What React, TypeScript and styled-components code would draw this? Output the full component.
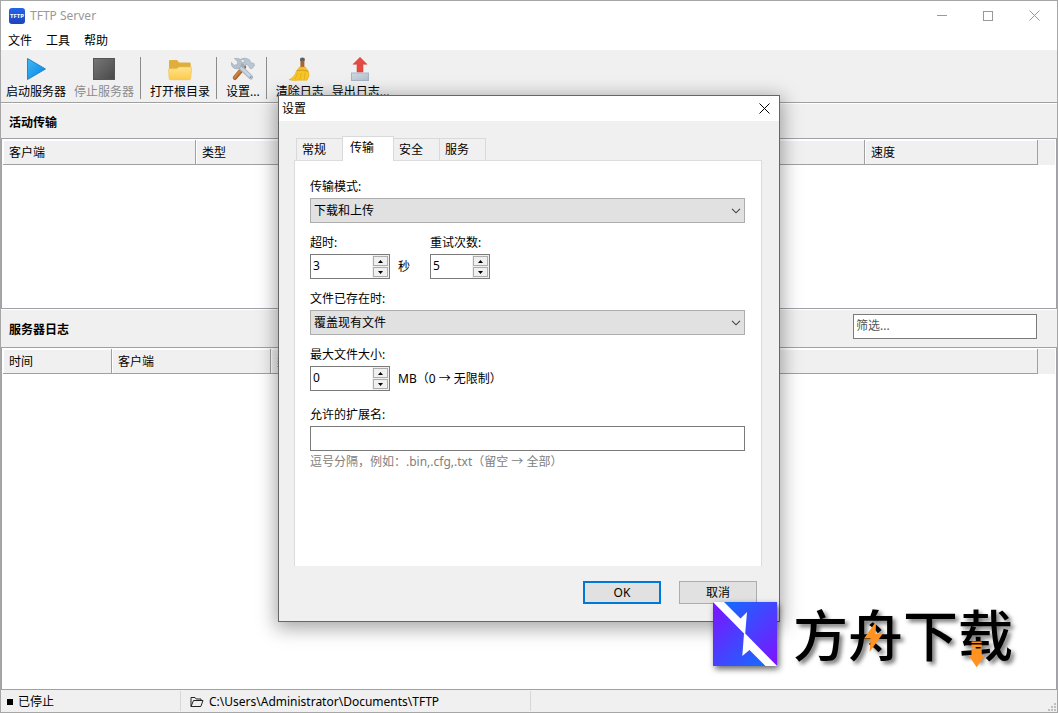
import React from "react";
import styled, { createGlobalStyle, css } from "styled-components";

const GlobalStyle = createGlobalStyle`
  *, *::before, *::after { box-sizing: border-box; }
  body { margin: 0; }
  body, button, input, select, table {
    font-family: "Noto Sans", "Noto Sans CJK SC", sans-serif;
    font-size: 12px;
    line-height: 16px;
    color: #000;
  }
  button, input, select { margin: 0; border-radius: 0; }
`;

const Window = styled.div`
  position: relative;
  display: flex;
  flex-direction: column;
  min-height: 100vh;
  border: 1px solid #a6a6a6;
  background: #fff;
  overflow: hidden;
`;

const TitleBar = styled.header`
  display: flex;
  align-items: center;
  height: 29px;
  padding-left: 8px;
`;

const WindowTitle = styled.h1`
  flex: 1;
  margin: 0 0 0 5px;
  font-size: 12px;
  font-weight: 400;
  color: #999;
`;

const CaptionButton = styled.button`
  display: flex;
  align-items: center;
  justify-content: center;
  width: 46px;
  height: 29px;
  padding: 0;
  border: 0;
  background: none;
`;

const MenuBar = styled.nav`
  display: flex;
  height: 20px;
  padding-left: 7px;
  gap: 14px;
`;

const MenuItem = styled.button`
  padding: 2px 0 0;
  border: 0;
  background: none;
  line-height: 18px;
`;

const Toolbar = styled.div`
  display: flex;
  height: 53px;
  padding-left: 1px;
  background: #f0f0f0;
  border-bottom: 1px solid #a0a0a0;
`;

const ToolButton = styled.button`
  display: flex;
  flex-direction: column;
  align-items: center;
  gap: 3px;
  padding: 5px 4px 0;
  border: 0;
  background: none;
  white-space: nowrap;

  &:disabled { color: #8b8b8b; }
`;

const ToolSeparator = styled.span`
  width: 1px;
  margin: 7px 5px 3px 2px;
  background: #8c8c8c;
`;

const SectionBar = styled.div<{ $height: number }>`
  display: flex;
  align-items: center;
  justify-content: space-between;
  height: ${(p) => p.$height}px;
  padding: 0 20px 0 8px;
  background: #f0f0f0;
  border-top: 1px solid #fff;
`;

const SectionTitle = styled.h2`
  margin: 0;
  padding-top: 3px;
  font-size: 12px;
  font-weight: 700;
`;

const FilterInput = styled.input`
  align-self: flex-start;
  width: 184px;
  height: 25px;
  margin-top: 4px;
  padding: 0 2px 2px;
  border: 1px solid #7a7a7a;
  background: #fff;

  &::placeholder { color: #555; opacity: 1; }
`;

const ListPane = styled.div<{ $grow: number }>`
  flex: ${(p) => p.$grow} 1 0;
  padding: 1px 1px 0;
  border: 1px solid #a0a0a8;
  background: #fff;
`;

const ListTable = styled.table`
  width: 100%;
  table-layout: fixed;
  border-collapse: separate;
  border-spacing: 0;
`;

const Col = styled.col<{ $width?: number }>`
  width: ${(p) => (p.$width ? `${p.$width}px` : "auto")};
`;

const HeadCell = styled.th`
  height: 25px;
  padding: 1px 6px 0;
  text-align: left;
  font-weight: 400;
  overflow: hidden;
  background: #f0f0f0;
  border-right: 1px solid #a0a0a0;
  border-bottom: 1px solid #a0a0a0;
  box-shadow: inset 1px 1px 0 #fff;
`;

const TailCell = styled.td`
  padding: 0;
  background: #f0f0f0;
`;

const StatusBar = styled.footer`
  display: flex;
  align-items: center;
  height: 22px;
  background: #f0f0f0;
`;

const StatusCell = styled.div<{ $width: number; $indent: number }>`
  display: flex;
  align-items: center;
  gap: 5px;
  width: ${(p) => p.$width}px;
  height: 20px;
  padding: 2px 0 0 ${(p) => p.$indent}px;
  border-right: 1px solid #d7d7d7;
`;

const StoppedMark = styled.span`
  width: 6px;
  height: 6px;
  background: #000;
`;

const Grip = styled.svg`
  align-self: flex-end;
  margin: 0 1px 1px auto;
`;

const DialogLayer = styled.div`
  position: absolute;
  inset: 0;
  display: flex;
  align-items: flex-start;
  justify-content: center;
  padding-top: 94px;
`;

const Dialog = styled.section`
  width: 502px;
  max-width: 100%;
  border: 1px solid #666;
  background: #f0f0f0;
  box-shadow: 0 4px 18px 2px rgba(0, 0, 0, 0.36);
`;

const DialogTitleBar = styled.div`
  display: flex;
  align-items: center;
  justify-content: space-between;
  height: 25px;
  padding-left: 3px;
  background: #fff;
`;

const DialogTitle = styled.h2`
  margin: 0;
  font-size: 12px;
  font-weight: 400;
`;

const DialogClose = styled(CaptionButton)`
  width: 30px;
  height: 25px;
`;

const DialogBody = styled.div`
  padding: 15px 17px 17px 15px;
`;

const TabList = styled.div`
  display: flex;
  align-items: flex-end;
  height: 24px;
  padding-left: 2px;
`;

const Tab = styled.button<{ $active?: boolean }>`
  height: 22px;
  width: 47px;
  padding: 0 0 0 5px;
  text-align: left;
  border: 1px solid #d9d9d9;
  border-bottom: 0;
  background: #f0f0f0;

  & + & { margin-left: -1px; }

  ${(p) =>
    p.$active &&
    css`
      position: relative;
      width: 52px;
      height: 25px;
      padding: 0 0 2px 7px;
      margin-bottom: -1px;
      background: #fff;
    `}
`;

const TabPanel = styled.div`
  min-height: 406px;
  padding: 17px 16px 17px 15px;
  border: 1px solid #dcdcdc;
  border-bottom: 0;
  background: #fff;
`;

const Fields = styled.form`
  display: flex;
  flex-direction: column;
  gap: 11px;
`;

const FieldRow = styled.div`
  display: flex;
  gap: 20px;
`;

const Field = styled.div<{ $spaced?: boolean }>`
  padding-top: ${(p) => (p.$spaced ? 4 : 0)}px;
`;

const Label = styled.label`
  display: block;
  height: 20px;
  line-height: 18px;
`;

const Inline = styled.div`
  display: flex;
  align-items: center;
  gap: 8px;
  white-space: nowrap;
`;

const SelectFrame = styled.div`
  display: grid;
  align-items: center;

  & > * { grid-area: 1 / 1; }
  & > svg { justify-self: end; margin-right: 4px; pointer-events: none; }
`;

const Select = styled.select`
  appearance: none;
  width: 100%;
  height: 25px;
  padding: 0 20px 0 3px;
  border: 1px solid #adadad;
  background: #e1e1e1;
`;

const TextInput = styled.input`
  display: block;
  width: 100%;
  height: 25px;
  padding: 0 3px;
  border: 1px solid #7a7a7a;
  background: #fff;
`;

const Hint = styled.p`
  margin: 3px 0 0;
  color: #808080;
`;

const SpinFrame = styled.div<{ $width: number }>`
  display: flex;
  width: ${(p) => p.$width}px;
  height: 25px;
  border: 1px solid #7a7a7a;
  background: #fff;
`;

const SpinInput = styled.input`
  appearance: textfield;
  flex: 1;
  min-width: 0;
  padding: 0 0 2px 2px;
  border: 0;
  background: none;

  &::-webkit-inner-spin-button { appearance: none; margin: 0; }
`;

const SpinButtons = styled.div`
  display: flex;
  flex-direction: column;
  gap: 1px;
  width: 17px;
  padding: 1px;
  background: #f0f0f0;
`;

const SpinButton = styled.button`
  display: flex;
  flex: 1;
  align-items: center;
  justify-content: center;
  padding: 0;
  border: 1px solid #adadad;
  background: #f0f0f0;
`;

const DialogActions = styled.div`
  display: flex;
  justify-content: flex-end;
  gap: 18px;
  padding: 15px 5px 0;
`;

const ActionButton = styled.button<{ $primary?: boolean }>`
  width: 78px;
  height: 23px;
  padding: 0;
  border: ${(p) => (p.$primary ? "2px solid #0078d7" : "1px solid #adadad")};
  background: #e1e1e1;
`;

const Watermark = styled.div`
  position: absolute;
  right: 44px;
  bottom: 46px;
  display: flex;
  align-items: flex-start;
  gap: 16px;
  pointer-events: none;
`;

const WatermarkLogo = styled.svg`
  filter: drop-shadow(2px 3px 3px rgba(0, 0, 0, 0.6));
`;

const WatermarkName = styled.div`
  position: relative;
  font-family: "Noto Sans CJK SC", sans-serif;
  font-size: 55px;
  font-weight: 500;
  line-height: 60px;
  text-shadow: 3px 3px 4px rgba(0, 0, 0, 0.55);
`;

const WatermarkAccents = styled.svg`
  position: absolute;
  inset: 0;
`;

function AppLogo() {
  return (
    <svg width="16" height="16" viewBox="0 0 16 16" aria-hidden="true">
      <defs>
        <linearGradient id="appBlue" x1="0" y1="0" x2="0" y2="1">
          <stop offset="0" stopColor="#2563eb" />
          <stop offset="1" stopColor="#1e44b8" />
        </linearGradient>
      </defs>
      <rect width="16" height="16" rx="3" fill="url(#appBlue)" />
      <text x="8" y="10" textAnchor="middle" fontSize="6" fontWeight="700" fill="#fff">TFTP</text>
    </svg>
  );
}

function PlayIcon() {
  return (
    <svg width="24" height="26" viewBox="0 0 24 26" aria-hidden="true">
      <defs>
        <linearGradient id="play" x1="0" y1="0" x2="1" y2="1">
          <stop offset="0" stopColor="#45b8f5" />
          <stop offset="0.6" stopColor="#1b98ea" />
          <stop offset="1" stopColor="#0c78cc" />
        </linearGradient>
      </defs>
      <path d="M3.5 3.5V24.5L21.5 14Z" fill="url(#play)" stroke="#2487cb" strokeWidth="1" />
    </svg>
  );
}

function StopIcon() {
  return (
    <svg width="24" height="26" viewBox="0 0 24 26" aria-hidden="true">
      <defs>
        <linearGradient id="stop" x1="0" y1="0" x2="1" y2="1">
          <stop offset="0" stopColor="#777" />
          <stop offset="1" stopColor="#494949" />
        </linearGradient>
      </defs>
      <rect x="1.5" y="3.5" width="21" height="21" fill="url(#stop)" stroke="#555" />
    </svg>
  );
}

function FolderIcon() {
  return (
    <svg width="24" height="26" viewBox="0 0 24 26" aria-hidden="true">
      <defs>
        <linearGradient id="folder" x1="0" y1="0" x2="0" y2="1">
          <stop offset="0" stopColor="#ffe48a" />
          <stop offset="1" stopColor="#fcca4d" />
        </linearGradient>
      </defs>
      <path d="M1 6.2Q1 5 2.2 5H9L11 7.5H21.5Q22.7 7.5 22.7 8.7V20H1Z" fill="#dfae3c" />
      <path d="M0.5 15Q0.6 13.7 1.8 13.7H8.5L11 12H22.6Q23.8 12 23.7 13.2L22.6 23.5Q22.4 24.7 21.2 24.7H2.4Q1.3 24.7 1.2 23.5Z" fill="url(#folder)" stroke="#ecc04c" strokeWidth=".6" />
    </svg>
  );
}

function ToolsIcon() {
  return (
    <svg width="24" height="26" viewBox="0 0 24 26" aria-hidden="true">
      <path d="M13 12L4 22.7" stroke="#a96327" strokeWidth="4.4" strokeLinecap="round" />
      <path d="M12.5 12L3.7 22.3" stroke="#cc8040" strokeWidth="2.4" strokeLinecap="round" />
      <path d="M8 11L19.8 22.2" stroke="#a5b3c1" strokeWidth="4.6" strokeLinecap="round" />
      <path d="M8 10.7L19.8 21.9" stroke="#c9d4df" strokeWidth="2.8" strokeLinecap="round" />
      <path d="M3.3 3.6L6.9 7L6 9.6L3.2 10.2L.3 7.2Q-.1 11.6 3 13.3Q6 14.7 9.2 12.7L10.8 10.4Q11.8 6.2 9 4.2Q6.6 2.6 3.3 3.6Z" fill="#b4c1cd" stroke="#95a4b3" strokeWidth=".5" />
      <path d="M10.6 12L14.5 7.8" stroke="#9fadbb" strokeWidth="3.6" />
      <path d="M9.5 4.3Q14.5 1.6 18.5 4.8L20 8L22.8 8.2L23.6 10.4L20.9 13.8L18.7 13.2L17.7 10.8L15.5 9.3L13.8 10.8L11 8.2L14.3 6.2Q12.7 4.3 9.5 4.3Z" fill="#b9c6d3" stroke="#8f9eae" strokeWidth=".5" />
      <circle cx="19.6" cy="22" r="1" fill="#8797a7" />
    </svg>
  );
}

function BroomIcon() {
  return (
    <svg width="24" height="26" viewBox="0 0 24 26" aria-hidden="true">
      <defs>
        <linearGradient id="bristles" x1="0" y1="0" x2="0" y2="1">
          <stop offset="0" stopColor="#f2c12d" />
          <stop offset="1" stopColor="#fbc91f" />
        </linearGradient>
      </defs>
      <path d="M12.4 3H16.4V13H12.4Z" fill="#a9652f" />
      <path d="M12.2 3.4Q14.4 1.6 16.6 3.4V6H12.2Z" fill="#5c6066" />
      <path d="M11.6 12H17.2L20.3 16Q22.4 20.6 19 25.2H10Q5 25.8 1.2 24.7Q7 21.6 8.4 16Z" fill="url(#bristles)" stroke="#d9a41f" strokeWidth=".5" />
      <path d="M8.8 15.8Q14 14.2 20 16.2" fill="none" stroke="#c9951c" strokeWidth=".9" />
      <path d="M10 18L7 24M13.3 18L11.7 24.5M17 18L16.3 24.5" fill="none" stroke="#dda71f" strokeWidth=".7" />
    </svg>
  );
}

function ExportIcon() {
  return (
    <svg width="24" height="26" viewBox="0 0 24 26" aria-hidden="true">
      <defs>
        <linearGradient id="tray" x1="0" y1="0" x2="1" y2="1">
          <stop offset="0" stopColor="#d0dae3" />
          <stop offset="1" stopColor="#b0becb" />
        </linearGradient>
      </defs>
      <rect x="2.5" y="18" width="17" height="7.5" fill="url(#tray)" stroke="#a7b4c1" />
      <path d="M11 2.3L18 9.3H14V17H8V9.3H4Z" fill="#e44a42" stroke="#d23c36" strokeWidth=".5" />
    </svg>
  );
}

function CrossIcon({ color, size }: { color: string; size: number }) {
  return (
    <svg width={size} height={size} viewBox="0 0 11 11" aria-hidden="true">
      <path d="M.5 .5L10.5 10.5M10.5 .5L.5 10.5" stroke={color} fill="none" />
    </svg>
  );
}

function Chevron() {
  return (
    <svg width="10" height="6" viewBox="0 0 10 6" aria-hidden="true">
      <path d="M1 .8L5 4.8L9 .8" fill="none" stroke="#444" strokeWidth="1.1" />
    </svg>
  );
}

function Spinner({ id, width, value }: { id: string; width: number; value: number }) {
  return (
    <SpinFrame $width={width}>
      <SpinInput id={id} type="number" min={0} defaultValue={value} />
      <SpinButtons>
        <SpinButton type="button" aria-label="增加">
          <svg width="5" height="3" viewBox="0 0 5 3"><path d="M0 3L2.5 0L5 3Z" /></svg>
        </SpinButton>
        <SpinButton type="button" aria-label="减少">
          <svg width="5" height="3" viewBox="0 0 5 3"><path d="M0 0L2.5 3L5 0Z" /></svg>
        </SpinButton>
      </SpinButtons>
    </SpinFrame>
  );
}

function Dropdown({ id, value }: { id: string; value: string }) {
  return (
    <SelectFrame>
      <Select id={id} defaultValue={value}>
        <option>{value}</option>
      </Select>
      <Chevron />
    </SelectFrame>
  );
}

function ListView({ grow, columns }: { grow: number; columns: { name: string; width?: number }[] }) {
  return (
    <ListPane $grow={grow}>
      <ListTable>
        <colgroup>
          {columns.map((c, i) => <Col key={i} $width={c.width} />)}
          <Col $width={17} />
        </colgroup>
        <thead>
          <tr>
            {columns.map((c, i) => <HeadCell key={i} scope="col">{c.name}</HeadCell>)}
            <TailCell />
          </tr>
        </thead>
      </ListTable>
    </ListPane>
  );
}

function SettingsDialog() {
  return (
    <Dialog role="dialog" aria-labelledby="settings-title">
      <DialogTitleBar>
        <DialogTitle id="settings-title">设置</DialogTitle>
        <DialogClose aria-label="关闭"><CrossIcon color="#000" size={11} /></DialogClose>
      </DialogTitleBar>
      <DialogBody>
        <TabList role="tablist">
          <Tab role="tab">常规</Tab>
          <Tab role="tab" aria-selected $active>传输</Tab>
          <Tab role="tab">安全</Tab>
          <Tab role="tab">服务</Tab>
        </TabList>
        <TabPanel role="tabpanel">
          <Fields>
            <Field>
              <Label htmlFor="mode">传输模式:</Label>
              <Dropdown id="mode" value="下载和上传" />
            </Field>
            <FieldRow>
              <Field>
                <Label htmlFor="timeout">超时:</Label>
                <Inline><Spinner id="timeout" width={80} value={3} /><span>秒</span></Inline>
              </Field>
              <Field>
                <Label htmlFor="retries">重试次数:</Label>
                <Spinner id="retries" width={60} value={5} />
              </Field>
            </FieldRow>
            <Field>
              <Label htmlFor="exists">文件已存在时:</Label>
              <Dropdown id="exists" value="覆盖现有文件" />
            </Field>
            <Field>
              <Label htmlFor="max-size">最大文件大小:</Label>
              <Inline><Spinner id="max-size" width={80} value={0} /><span>MB（0 → 无限制）</span></Inline>
            </Field>
            <Field $spaced>
              <Label htmlFor="extensions">允许的扩展名:</Label>
              <TextInput id="extensions" type="text" />
              <Hint>逗号分隔，例如：.bin,.cfg,.txt（留空 → 全部）</Hint>
            </Field>
          </Fields>
        </TabPanel>
        <DialogActions>
          <ActionButton type="button" $primary>OK</ActionButton>
          <ActionButton type="button">取消</ActionButton>
        </DialogActions>
      </DialogBody>
    </Dialog>
  );
}

function Brand() {
  return (
    <Watermark>
      <WatermarkLogo width="64" height="64" viewBox="0 0 64 64" aria-hidden="true">
        <defs>
          <linearGradient id="brandTop" x1="0.1" y1="0" x2="1" y2="0.9">
            <stop offset="0" stopColor="#0f70ff" />
            <stop offset="1" stopColor="#7a16ff" />
          </linearGradient>
          <linearGradient id="brandBottom" x1="0" y1="0.1" x2="0.9" y2="1">
            <stop offset="0" stopColor="#7a16ff" />
            <stop offset="1" stopColor="#0f70ff" />
          </linearGradient>
        </defs>
        <path d="M0 0H64V64Z" fill="url(#brandTop)" />
        <path d="M0 0V64H64Z" fill="url(#brandBottom)" />
        <path d="M0 0H11L27.5 16.5L34 10L32.2 31.5L64 64H52.5L36.5 48L29.3 54L31 31.5Z" fill="#fff" />
      </WatermarkLogo>
      <WatermarkName>
        方舟下载
        <WatermarkAccents width="220" height="68" viewBox="0 0 220 68" aria-hidden="true">
          <path d="M83 19.5L71 36.6H77.6L76.6 50L89.5 32H82.6Z" fill="#ff9220" />
          <path d="M178.5 39.5H188.7V41H178.5ZM178.5 42.5H188.7V45H178.5ZM178.5 46.5H188.7V53H192L183.7 65.3L175.3 53H178.5Z" fill="#ff9220" />
        </WatermarkAccents>
      </WatermarkName>
    </Watermark>
  );
}

export default function App() {
  return (
    <>
      <GlobalStyle />
      <Window>
        <TitleBar>
          <AppLogo />
          <WindowTitle>TFTP Server</WindowTitle>
          <CaptionButton aria-label="最小化">
            <svg width="10" height="1"><rect width="10" height="1" fill="#999" /></svg>
          </CaptionButton>
          <CaptionButton aria-label="最大化">
            <svg width="10" height="10"><rect x=".5" y=".5" width="9" height="9" fill="none" stroke="#999" /></svg>
          </CaptionButton>
          <CaptionButton aria-label="关闭"><CrossIcon color="#999" size={11} /></CaptionButton>
        </TitleBar>
        <MenuBar>
          <MenuItem>文件</MenuItem>
          <MenuItem>工具</MenuItem>
          <MenuItem>帮助</MenuItem>
        </MenuBar>
        <Toolbar role="toolbar">
          <ToolButton><PlayIcon />启动服务器</ToolButton>
          <ToolButton disabled><StopIcon />停止服务器</ToolButton>
          <ToolSeparator />
          <ToolButton><FolderIcon />打开根目录</ToolButton>
          <ToolSeparator />
          <ToolButton><ToolsIcon />设置...</ToolButton>
          <ToolSeparator />
          <ToolButton><BroomIcon />清除日志</ToolButton>
          <ToolButton><ExportIcon />导出日志...</ToolButton>
        </Toolbar>
        <SectionBar $height={35}>
          <SectionTitle>活动传输</SectionTitle>
        </SectionBar>
        <ListView
          grow={42}
          columns={[{ name: "客户端", width: 193 }, { name: "类型" }, { name: "速度", width: 173 }]}
        />
        <SectionBar $height={38}>
          <SectionTitle>服务器日志</SectionTitle>
          <FilterInput type="text" placeholder="筛选..." aria-label="筛选" />
        </SectionBar>
        <ListView
          grow={85}
          columns={[{ name: "时间", width: 109 }, { name: "客户端", width: 159 }, { name: "类型" }]}
        />
        <StatusBar>
          <StatusCell $width={180} $indent={6}>
            <StoppedMark />已停止
          </StatusCell>
          <StatusCell $width={350} $indent={9}>
            <svg width="14" height="12" viewBox="0 0 14 12" aria-hidden="true">
              <path d="M1 10.5V1.5H5L6.2 3H11V4.5M1 10.5L3.5 4.5H13L10.8 10.5Z" fill="none" stroke="#222" strokeLinejoin="round" />
            </svg>
            C:\Users\Administrator\Documents\TFTP
          </StatusCell>
          <Grip width="8" height="8" viewBox="0 0 8 8" aria-hidden="true">
            <path d="M6 0H8V2H6ZM3 3H5V5H3ZM6 3H8V5H6ZM0 6H2V8H0ZM3 6H5V8H3ZM6 6H8V8H6Z" fill="#bfbfbf" />
          </Grip>
        </StatusBar>
        <DialogLayer>
          <SettingsDialog />
        </DialogLayer>
        <Brand />
      </Window>
    </>
  );
}
